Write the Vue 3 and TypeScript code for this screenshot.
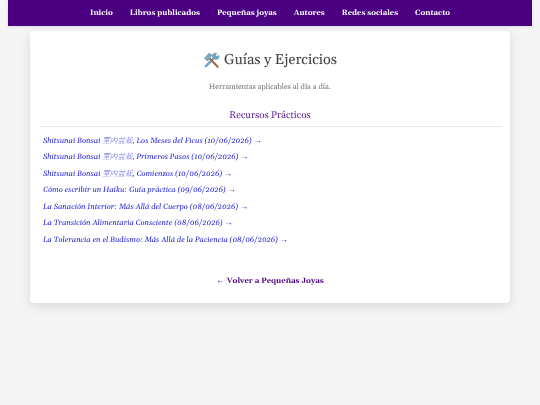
<script setup lang="ts">
interface Guide { before: string; cjk?: string; after: string }
const navItems: string[] = ['Inicio', 'Libros publicados', 'Pequeñas joyas', 'Autores', 'Redes sociales', 'Contacto']
const guides: Guide[] = [
  { before: 'Shitsunai Bonsai ', cjk: '室内盆栽', after: ', Los Meses del Ficus (10/06/2026) ' },
  { before: 'Shitsunai Bonsai ', cjk: '室内盆栽', after: ', Primeros Pasos (10/06/2026) ' },
  { before: 'Shitsunai Bonsai ', cjk: '室内盆栽', after: ', Comienzos (10/06/2026) ' },
  { before: 'Cómo escribir un Haiku: Guía práctica (09/06/2026) ', after: '' },
  { before: 'La Sanación Interior: Más Allá del Cuerpo (08/06/2026) ', after: '' },
  { before: 'La Transición Alimentaria Consciente (08/06/2026) ', after: '' },
  { before: 'La Tolerancia en el Budismo: Más Allá de la Paciencia (08/06/2026) ', after: '' },
]
</script>

<template>
  <div class="page">
    <nav class="nav">
      <a v-for="item in navItems" :key="item" class="nav-link" href="#">{{ item }}</a>
    </nav>
    <main class="card">
      <h1 class="title">
        <svg class="icon" viewBox="0 0 36 36" aria-hidden="true">
          <path d="M6 30 L25 11" stroke="#6fa3c0" stroke-width="5" stroke-linecap="round" />
          <circle cx="27" cy="9" r="7.5" fill="#6fa3c0" />
          <path d="M27 9 L30 0 L36 6 Z" fill="#fff" />
          <path d="M14 14 L31 31" stroke="#a5673f" stroke-width="4.5" stroke-linecap="round" />
          <path d="M2 13 L12 2 C17 3 20 5 22 8 L17 10 L11 19 L8 19 Z" fill="#7fa8bd" />
        </svg>
        <span>Guías y Ejercicios</span>
      </h1>
      <p class="subtitle">Herramientas aplicables al día a día.</p>
      <h2 class="section">Recursos Prácticos</h2>
      <ul class="list">
        <li v-for="guide in guides" :key="guide.before + guide.after">
          <a href="#">{{ guide.before }}<span v-if="guide.cjk" class="cjk">{{ guide.cjk }}</span>{{ guide.after }}<span class="arrow">→</span></a>
        </li>
      </ul>
      <a class="back" href="#"><span class="arrow">←</span> Volver a Pequeñas Joyas</a>
    </main>
  </div>
</template>

<style>
html, body { margin: 0; background: #f5f5f5; }
</style>

<style scoped>
.page {
  font-family: Georgia, Gelasio, "Liberation Serif", "Noto Sans CJK JP", serif;
  text-rendering: geometricPrecision;
  min-height: 405px;
  background: #f5f5f5;
  display: flex;
  flex-direction: column;
  align-items: center;
}
.nav {
  width: 524px;
  height: 26px;
  background: #4b0082;
  display: flex;
  justify-content: center;
  align-items: center;
  gap: 17px;
  box-shadow: 0 1px 3px rgba(0, 0, 0, 0.1);
  will-change: transform;
}
.nav-link {
  color: #fff;
  font-size: 7.6px;
  font-weight: 700;
  text-decoration: none;
}
.card {
  box-sizing: border-box;
  width: 480px;
  height: 272px;
  margin-top: 5px;
  background: #fff;
  border-radius: 4px;
  box-shadow: 0 3px 12px rgba(0, 0, 0, 0.12);
  padding: 0 8.5px;
  display: flex;
  flex-direction: column;
  will-change: transform;
}
.title {
  margin: 19.5px 0 0;
  font-size: 14.5px;
  font-weight: 400;
  color: #444;
  display: flex;
  justify-content: center;
  align-items: center;
  gap: 4px;
  line-height: 19px;
}
.icon { width: 17px; height: 17px; }
.subtitle {
  margin: 11px 0 0;
  text-align: center;
  font-size: 7.6px;
  color: #777;
  line-height: 12px;
}
.section {
  margin: 16px 0 0;
  padding-bottom: 3px;
  text-align: center;
  font-size: 9.8px;
  font-weight: 400;
  color: #5a1e94;
  line-height: 14px;
  border-bottom: 1px solid #e8e8e8;
}
.list {
  list-style: none;
  margin: 4px 0 0;
  padding: 0 0 0 4.5px;
}
.list li {
  height: 16.6px;
  line-height: 16.6px;
}
.list a {
  font-size: 7.6px;
  font-style: italic;
  color: #1c1cd8;
  text-decoration: none;
}
.cjk { font-family: "Noto Sans CJK JP", sans-serif; font-weight: 300; opacity: 0.75; }
.arrow { font-family: "Liberation Serif", serif; font-style: normal; font-size: 1.1em; }
.back {
  margin-top: 28px;
  text-align: center;
  font-size: 7.7px;
  font-weight: 700;
  color: #4b0082;
  text-decoration: none;
}
</style>
